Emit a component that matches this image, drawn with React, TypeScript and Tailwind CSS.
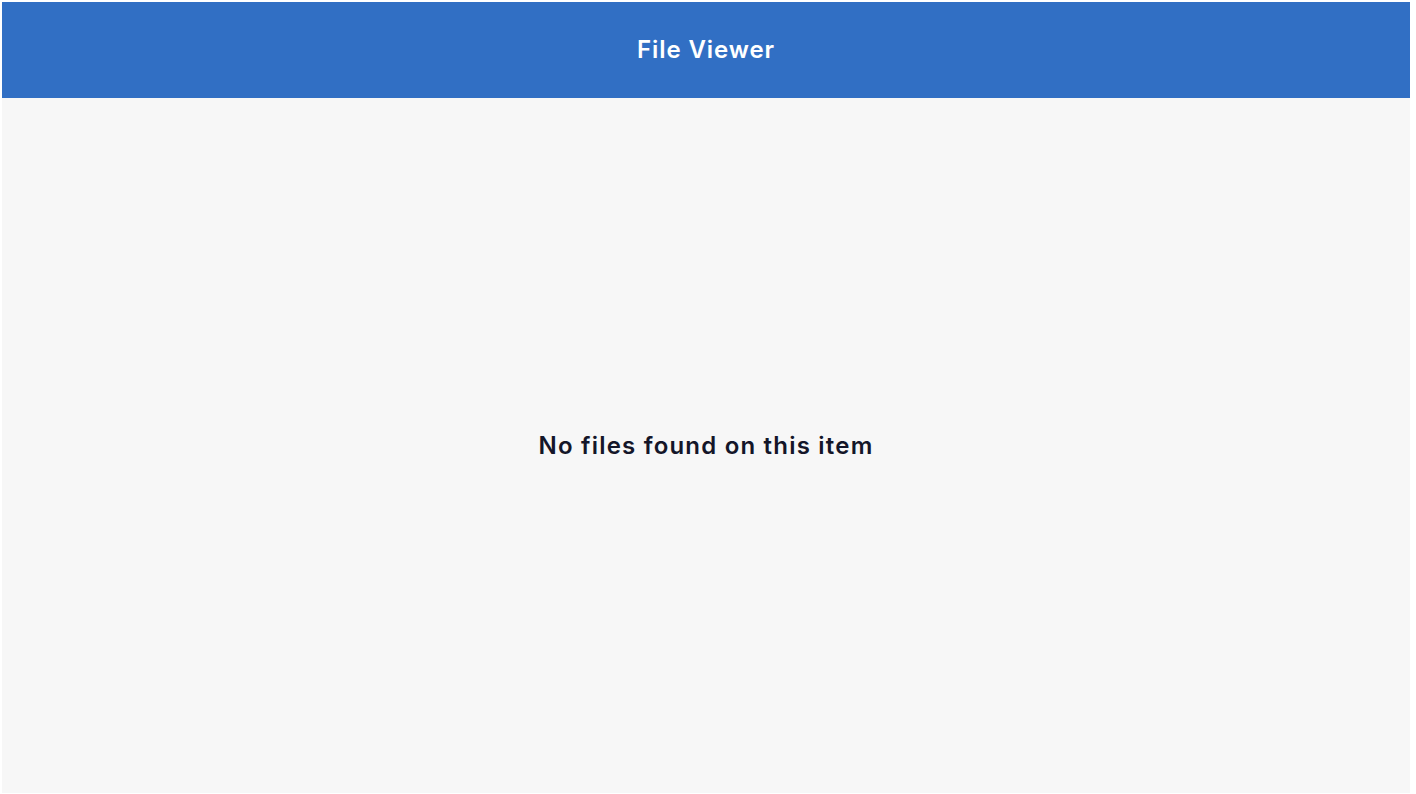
export default function App() {
  return (
    <div className="w-[1416px] h-[794px] bg-white pt-[2px] pl-[2px] pr-[6px] pb-[1px] flex flex-col" style={{ fontFamily: "Inter, 'Open Sans', sans-serif" }}>
      <div className="h-[96px] shrink-0 bg-[#316fc4] flex items-center justify-center">
        <h1 className="text-white text-[24px] font-semibold tracking-[0.9px]">File Viewer</h1>
      </div>
      <div className="flex-1 bg-[#f7f7f7] flex items-center justify-center">
        <p className="text-[#141629] text-[24px] font-semibold tracking-[1.2px]">No files found on this item</p>
      </div>
    </div>
  );
}
